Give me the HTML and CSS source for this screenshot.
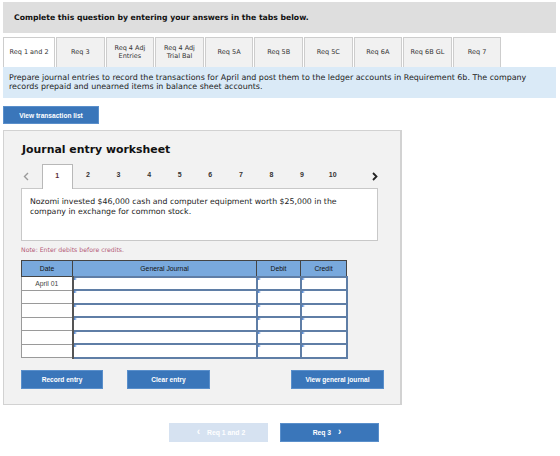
FILE: index.html
```html
<!DOCTYPE html>
<html>
<head>
<meta charset="utf-8">
<link rel="stylesheet" href="styles.css">
</head>
<body>
<div class="page">
  <div class="topbar">Complete this question by entering your answers in the tabs below.</div>
  <div class="tabs">
    <div class="tab active">Req 1 and 2</div>
    <div class="tab">Req 3</div>
    <div class="tab">Req 4 Adj<br>Entries</div>
    <div class="tab">Req 4 Adj<br>Trial Bal</div>
    <div class="tab">Req 5A</div>
    <div class="tab">Req 5B</div>
    <div class="tab">Req 5C</div>
    <div class="tab">Req 6A</div>
    <div class="tab">Req 6B GL</div>
    <div class="tab">Req 7</div>
  </div>
  <div class="instr">Prepare journal entries to record the transactions for April and post them to the ledger accounts in Requirement 6b. The company records prepaid and unearned items in balance sheet accounts.</div>
  <button class="btn btn-view">View transaction list</button>

  <div class="panel">
    <h2 class="title">Journal entry worksheet</h2>
    <div class="steps">
      <span class="arrow prev"><svg width="6" height="9" viewBox="0 0 6 9"><path d="M5 1 L1.5 4.5 L5 8" fill="none" stroke="#9a9a9a" stroke-width="1.4"/></svg></span>
      <span class="step active">1</span>
      <span class="step">2</span>
      <span class="step">3</span>
      <span class="step">4</span>
      <span class="step">5</span>
      <span class="step">6</span>
      <span class="step">7</span>
      <span class="step">8</span>
      <span class="step">9</span>
      <span class="step">10</span>
      <span class="arrow next"><svg width="6" height="9" viewBox="0 0 6 9"><path d="M1 1 L4.5 4.5 L1 8" fill="none" stroke="#222" stroke-width="1.8"/></svg></span>
    </div>
    <div class="desc">Nozomi invested $46,000 cash and computer equipment worth $25,000 in the company in exchange for common stock.</div>
    <div class="note">Note: Enter debits before credits.</div>
    <table class="journal">
      <thead>
        <tr><th class="c-date">Date</th><th class="c-gj">General Journal</th><th class="c-dr">Debit</th><th class="c-cr">Credit</th></tr>
      </thead>
      <tbody>
        <tr><td class="date">April 01</td><td class="in"></td><td class="in"></td><td class="in"></td></tr>
        <tr><td class="date"></td><td class="in"></td><td class="in"></td><td class="in"></td></tr>
        <tr><td class="date"></td><td class="in"></td><td class="in"></td><td class="in"></td></tr>
        <tr><td class="date"></td><td class="in"></td><td class="in"></td><td class="in"></td></tr>
        <tr><td class="date"></td><td class="in"></td><td class="in"></td><td class="in"></td></tr>
        <tr><td class="date"></td><td class="in"></td><td class="in"></td><td class="in"></td></tr>
      </tbody>
    </table>
    <div class="actions">
      <button class="btn btn-record">Record entry</button>
      <button class="btn btn-clear">Clear entry</button>
      <button class="btn btn-gj">View general journal</button>
    </div>
  </div>

  <div class="nav">
    <button class="btn nav-btn disabled"><span class="chev">&#8249;</span> Req 1 and 2</button>
    <button class="btn nav-btn">Req 3 <span class="chev">&#8250;</span></button>
  </div>
</div>
</body>
</html>
```

FILE: styles.css
```css
* { box-sizing: border-box; }
body {
  margin: 0;
  background: #fff;
  font-family: "DejaVu Sans", Verdana, sans-serif;
  color: #222;
}
.page {
  width: 553px;
  margin: 2px 0 0 3px;
}
.topbar {
  height: 31px;
  background: #dedede;
  font-weight: bold;
  font-size: 7.7px;
  padding-left: 11px;
  display: flex;
  align-items: center;
  color: #111;
}
.tabs {
  display: flex;
  gap: 1px;
  margin-top: 4px;
  height: 30px;
}
.tab {
  width: 48.6px;
  border: 1px solid #cdcdcd;
  border-bottom: none;
  background: #f1f1f1;
  font-size: 6.5px;
  line-height: 7.5px;
  color: #333;
  display: flex;
  align-items: center;
  justify-content: center;
  text-align: center;
}
.tab.active {
  width: 52px;
  background: #fff;
}
.instr {
  height: 31px;
  background: #daeaf7;
  padding: 6px 28px 0 6px;
  font-size: 7.95px;
  line-height: 9px;
  color: #222;
}
.btn {
  border: 1px solid #5a8fcb;
  background: #3a76ba;
  color: #fff;
  font-family: "Liberation Sans", Arial, sans-serif;
  font-weight: bold;
  font-size: 6.6px;
  padding: 0;
  cursor: pointer;
  flex-shrink: 0;
}
.btn-view {
  display: block;
  margin-top: 8px;
  width: 96px;
  height: 18px;
}
.panel {
  margin-top: 6px;
  width: 399px;
  background: #f2f2f2;
  border: 1px solid #d2d2d2;
  border-right-width: 2px;
  padding: 12px 22px 15px 17px;
}
.title {
  margin: 0;
  font-size: 10.9px;
  line-height: 14px;
  font-weight: bold;
  color: #111;
  padding-left: 1px;
}
.steps {
  margin-top: 7px;
  height: 24px;
  display: flex;
  align-items: stretch;
}
.arrow {
  display: flex;
  align-items: center;
}
.arrow.prev {
  width: 21px;
  padding-left: 2px;
}
.arrow.next {
  margin-left: auto;
}
.step {
  width: 30.6px;
  display: flex;
  align-items: center;
  justify-content: center;
  padding-bottom: 3px;
  font-family: "Liberation Sans", Arial, sans-serif;
  font-weight: bold;
  font-size: 7px;
  color: #333;
}
.step.active {
  background: #fff;
  border: 1px solid #b8b8b8;
  border-bottom: none;
  margin-bottom: -1px;
  position: relative;
  z-index: 1;
  color: #5a2a35;
}
.desc {
  height: 53px;
  background: #fff;
  border: 1px solid #c8c8c8;
  padding: 8px 8px 0;
  font-size: 7.8px;
  line-height: 10px;
  color: #222;
}
.note {
  margin-top: 4px;
  height: 10px;
  font-size: 6.2px;
  line-height: 10px;
  color: #b45a78;
}
.journal {
  margin-top: 5px;
  width: 325px;
  border-collapse: collapse;
  border: 1px solid #555;
  font-family: "Liberation Sans", Arial, sans-serif;
  font-size: 6.8px;
  table-layout: fixed;
}
.journal th {
  height: 16px;
  background: #79a9dd;
  border: 1px solid #444;
  font-weight: normal;
  color: #111;
  padding: 0;
}
.c-date { width: 51px; }
.c-gj { width: 184px; }
.c-dr { width: 44px; }
.c-cr { width: 46px; }
.journal td {
  height: 13.5px;
  padding: 0;
  background: #fff;
}
.journal td.date {
  border: 1px solid #9a9a9a;
  border-right: 2px solid #555;
  text-align: center;
  color: #444;
}
.journal td.in {
  border: 2px solid #5f7ea6;
  position: relative;
}
.journal td.in::before {
  content: "";
  position: absolute;
  left: 0;
  top: 0;
  border-left: 3px solid #3f7bd0;
  border-top: 1.5px solid transparent;
  border-bottom: 1.5px solid transparent;
}
.actions {
  margin-top: 11px;
  display: flex;
  align-items: center;
}
.actions .btn {
  height: 19px;
}
.btn-record { width: 82px; }
.btn-clear { width: 83px; margin-left: 24px; }
.btn-gj { width: 93px; margin-left: 81px; }
.nav {
  margin-top: 18px;
  padding-left: 166px;
  display: flex;
  gap: 12px;
}
.nav-btn {
  width: 99px;
  height: 19px;
  font-size: 6.8px;
}
.nav-btn .chev {
  font-size: 10px;
  line-height: 1;
  margin: 0 5px;
}
.nav-btn.disabled {
  background: #d6e2f1;
  border-color: #d6e2f1;
  color: #fff;
}
```
